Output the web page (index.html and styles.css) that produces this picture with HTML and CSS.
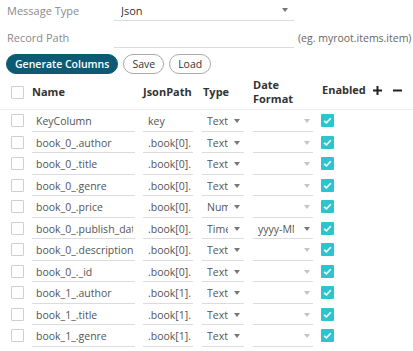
FILE: index.html
```html
<!DOCTYPE html>
<html lang="en">
<head>
<meta charset="UTF-8" />
<meta name="viewport" content="width=device-width, initial-scale=1" />
<title>JSON Columns</title>
<link rel="stylesheet" href="styles.css">
</head>
<body>
  <div class="panel">
    <div class="field-row">
      <label class="field-label">Message Type</label>
      <div class="select select-wide"><span class="select-text">Json</span><span class="caret"></span></div>
    </div>
    <div class="field-row">
      <label class="field-label">Record Path</label>
      <input class="text-input input-wide" type="text" value="">
      <span class="hint">(eg. myroot.items.item)</span>
    </div>
    <div class="actions">
      <button class="btn btn-primary">Generate Columns</button>
      <button class="btn">Save</button>
      <button class="btn">Load</button>
    </div>

    <div class="columns">
      <div class="col-row col-head">
        <span class="check"></span>
        <span>Name</span>
        <span>JsonPath</span>
        <span>Type</span>
        <span class="two-line">Date<br>Format</span>
        <span class="head-enabled">Enabled
          <svg class="icon" width="9" height="9" viewBox="0 0 9 9"><path d="M4.5 0v9M0 4.5h9" stroke="#222" stroke-width="2"/></svg>
          <svg class="icon minus" width="9" height="9" viewBox="0 0 9 9"><path d="M0 4.5h9" stroke="#222" stroke-width="2"/></svg>
        </span>
      </div>

      <div class="col-row">
        <span class="check"></span>
        <input class="text-input in-name" value="KeyColumn">
        <input class="text-input in-path" value="key">
        <div class="select in-type"><span class="select-text">Text</span><span class="caret"></span></div>
        <div class="select in-date"><span class="select-text"></span><span class="caret light"></span></div>
        <span class="check on"></span>
      </div>
      <div class="col-row">
        <span class="check"></span>
        <input class="text-input in-name" value="book_0_.author">
        <input class="text-input in-path" value=".book[0].author">
        <div class="select in-type"><span class="select-text">Text</span><span class="caret"></span></div>
        <div class="select in-date"><span class="select-text"></span><span class="caret light"></span></div>
        <span class="check on"></span>
      </div>
      <div class="col-row">
        <span class="check"></span>
        <input class="text-input in-name" value="book_0_.title">
        <input class="text-input in-path" value=".book[0].title">
        <div class="select in-type"><span class="select-text">Text</span><span class="caret"></span></div>
        <div class="select in-date"><span class="select-text"></span><span class="caret light"></span></div>
        <span class="check on"></span>
      </div>
      <div class="col-row">
        <span class="check"></span>
        <input class="text-input in-name" value="book_0_.genre">
        <input class="text-input in-path" value=".book[0].genre">
        <div class="select in-type"><span class="select-text">Text</span><span class="caret"></span></div>
        <div class="select in-date"><span class="select-text"></span><span class="caret light"></span></div>
        <span class="check on"></span>
      </div>
      <div class="col-row">
        <span class="check"></span>
        <input class="text-input in-name" value="book_0_.price">
        <input class="text-input in-path" value=".book[0].price">
        <div class="select in-type"><span class="select-text">Number</span><span class="caret"></span></div>
        <div class="select in-date"><span class="select-text"></span><span class="caret light"></span></div>
        <span class="check on"></span>
      </div>
      <div class="col-row">
        <span class="check"></span>
        <input class="text-input in-name" value="book_0_.publish_date">
        <input class="text-input in-path" value=".book[0].publish_date">
        <div class="select in-type"><span class="select-text">Time</span><span class="caret"></span></div>
        <div class="select in-date"><span class="select-text">yyyy-MM-dd</span><span class="caret"></span></div>
        <span class="check on"></span>
      </div>
      <div class="col-row">
        <span class="check"></span>
        <input class="text-input in-name" value="book_0_.description">
        <input class="text-input in-path" value=".book[0].description">
        <div class="select in-type"><span class="select-text">Text</span><span class="caret"></span></div>
        <div class="select in-date"><span class="select-text"></span><span class="caret light"></span></div>
        <span class="check on"></span>
      </div>
      <div class="col-row">
        <span class="check"></span>
        <input class="text-input in-name" value="book_0_._id">
        <input class="text-input in-path" value=".book[0]._id">
        <div class="select in-type"><span class="select-text">Text</span><span class="caret"></span></div>
        <div class="select in-date"><span class="select-text"></span><span class="caret light"></span></div>
        <span class="check on"></span>
      </div>
      <div class="col-row">
        <span class="check"></span>
        <input class="text-input in-name" value="book_1_.author">
        <input class="text-input in-path" value=".book[1].author">
        <div class="select in-type"><span class="select-text">Text</span><span class="caret"></span></div>
        <div class="select in-date"><span class="select-text"></span><span class="caret light"></span></div>
        <span class="check on"></span>
      </div>
      <div class="col-row">
        <span class="check"></span>
        <input class="text-input in-name" value="book_1_.title">
        <input class="text-input in-path" value=".book[1].title">
        <div class="select in-type"><span class="select-text">Text</span><span class="caret"></span></div>
        <div class="select in-date"><span class="select-text"></span><span class="caret light"></span></div>
        <span class="check on"></span>
      </div>
      <div class="col-row">
        <span class="check"></span>
        <input class="text-input in-name" value="book_1_.genre">
        <input class="text-input in-path" value=".book[1].genre">
        <div class="select in-type"><span class="select-text">Text</span><span class="caret"></span></div>
        <div class="select in-date"><span class="select-text"></span><span class="caret light"></span></div>
        <span class="check on"></span>
      </div>
    </div>
  </div>
</body>
</html>
```

FILE: styles.css
```css
body {
  margin: 0;
  font-family: "Open Sans", sans-serif;
  font-size: 11px;
  color: #333;
  background: #fff;
}
.field-row {
  display: flex;
  align-items: center;
  height: 21px;
  padding-left: 7px;
  margin-bottom: 6px;
}
.field-row + .field-row {
  margin-top: 1px;
}
.field-label {
  width: 107px;
  color: #8a8a8a;
}
.select {
  display: flex;
  align-items: center;
  height: 100%;
  box-sizing: border-box;
  border-bottom: 1px solid #dcdcdc;
  padding-left: 5px;
}
.select-wide {
  width: 180px;
  padding-left: 7px;
}
.select-wide .select-text {
  flex: 1;
  color: #333;
}
.select-wide .caret {
  margin-right: 6px;
}
.select-text {
  white-space: nowrap;
  overflow: hidden;
  color: #555;
}
.caret {
  flex: none;
  width: 0;
  height: 0;
  border-left: 3.5px solid transparent;
  border-right: 3.5px solid transparent;
  border-top: 4px solid #777;
}
.caret.light {
  border-top-color: #c4c4c4;
}
.text-input {
  font: inherit;
  color: #555;
  border: none;
  border-bottom: 1px solid #dcdcdc;
  outline: none;
  padding: 0 4px;
  height: 100%;
  box-sizing: border-box;
  background: transparent;
}
.input-wide {
  width: 180px;
}
.hint {
  margin-left: 4px;
  color: #666;
  font-size: 10.5px;
}
.actions {
  display: flex;
  gap: 4px;
  padding-left: 6px;
  margin-top: 4px;
}
.btn {
  font-family: inherit;
  font-size: 10.5px;
  height: 20px;
  padding: 0 8px;
  border: 1px solid #aaa;
  border-radius: 10px;
  background: #fff;
  color: #333;
  line-height: 18px;
}
.btn-primary {
  background: #0c5a73;
  border-color: #0c5a73;
  color: #fff;
  font-weight: 600;
  padding: 0 8px;
}
.btn + .btn {
  margin-left: 1px;
}
.columns {
  margin-top: 3px;
}
.col-row {
  display: grid;
  grid-template-columns: 32px 111px 59px 51px 68px 1fr;
  align-items: center;
  height: 21.5px;
  font-size: 10.5px;
}
.col-row > .text-input,
.col-row > .select {
  height: 20px;
  align-self: end;
}
.col-head {
  height: auto;
  padding: 1px 0 3px;
  border-bottom: 1px solid #eee;
  font-size: 11px;
  font-weight: 700;
  color: #333;
  line-height: 14px;
}
.col-head > span:nth-child(4) {
  padding-left: 1px;
}
.head-enabled {
  display: flex;
  align-items: center;
  align-self: start;
  padding-top: 5px;
  padding-left: 1px;
}
.icon {
  margin-left: 7px;
}
.icon.minus {
  margin-left: 11px;
}
.check {
  width: 13px;
  height: 13px;
  box-sizing: border-box;
  border: 1px solid #cfcfcf;
  border-radius: 1px;
  margin-left: 11px;
  background: #fff;
}
.check.on {
  margin-left: 0;
  border: none;
  background: #2cc4cf url("data:image/svg+xml,%3Csvg xmlns='http://www.w3.org/2000/svg' width='13' height='13'%3E%3Cpath d='M3.2 6.8l2.2 2.1 4.4-4.6' fill='none' stroke='white' stroke-width='1.6'/%3E%3C/svg%3E") no-repeat center;
}
.in-name {
  width: 103px;
  padding-right: 2px;
}
.in-path {
  width: 50px;
  padding-left: 5px;
  padding-right: 2px;
}
.in-type {
  width: 42px;
  padding-left: 5px;
}
.in-type .select-text {
  width: 21px;
  margin-right: 6px;
}
.in-date {
  width: 60px;
  padding-left: 5px;
}
.in-date .select-text {
  width: 36px;
  margin-right: 10px;
}
```
